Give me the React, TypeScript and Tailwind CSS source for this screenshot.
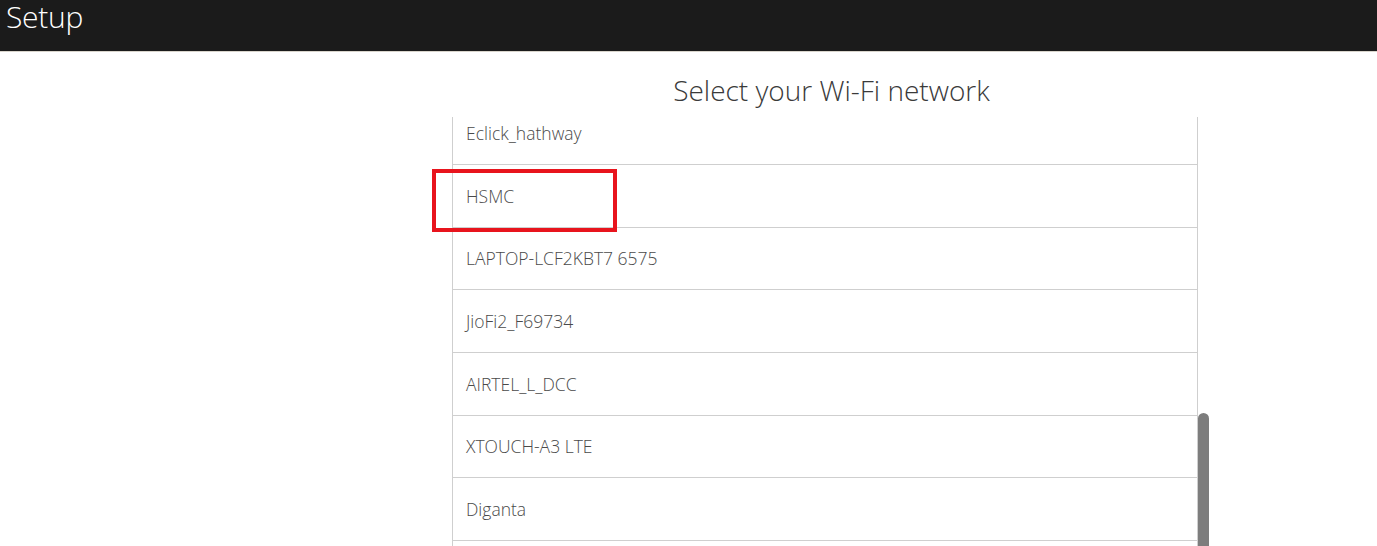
import React from "react";

const networks = [
  "Eclick_hathway",
  "HSMC",
  "LAPTOP-LCF2KBT7 6575",
  "JioFi2_F69734",
  "AIRTEL_L_DCC",
  "XTOUCH-A3 LTE",
  "Diganta",
  "",
];

export default function App() {
  return (
    <div
      className="w-[1377px] h-[546px] overflow-hidden bg-white flex flex-col"
      style={{ fontFamily: '"Open Sans", "Noto Sans", sans-serif' }}
    >
      <header className="h-[52px] shrink-0 bg-[#1b1b1b] border-b border-[#d9d5cc] flex items-start pl-[6px]">
        <span className="text-[30px] leading-[34px] text-white font-light tracking-[-0.3px]">
          Setup
        </span>
      </header>
      <div className="flex-1 flex justify-start pl-[452px] relative">
        <div className="w-[746px] flex flex-col">
          <h1 className="h-[65px] shrink-0 flex items-center justify-center pl-[13px] pt-[10px] text-[28px] font-light text-[#3a3a3a]">
            Select your Wi-Fi network
          </h1>
          <div className="flex-1 overflow-hidden border-l border-r border-[#cfcfcf]">
            <ul className="-mt-[14.67px]">
              {networks.map((n, i) => (
                <li
                  key={i}
                  className="h-[62.67px] border-b border-[#cfcfcf] flex items-center pl-[13px] text-[17.5px] font-light text-[#4a4a4a]"
                >
                  {n}
                </li>
              ))}
            </ul>
          </div>
        </div>
        <div className="absolute left-[1198px] top-[361px] w-[11px] h-[200px] rounded-full bg-[#7d7d7d]" />
        <div className="absolute left-[432px] top-[117px] w-[185px] h-[63px] border-[4px] border-[#e8141d]" />
      </div>
    </div>
  );
}
